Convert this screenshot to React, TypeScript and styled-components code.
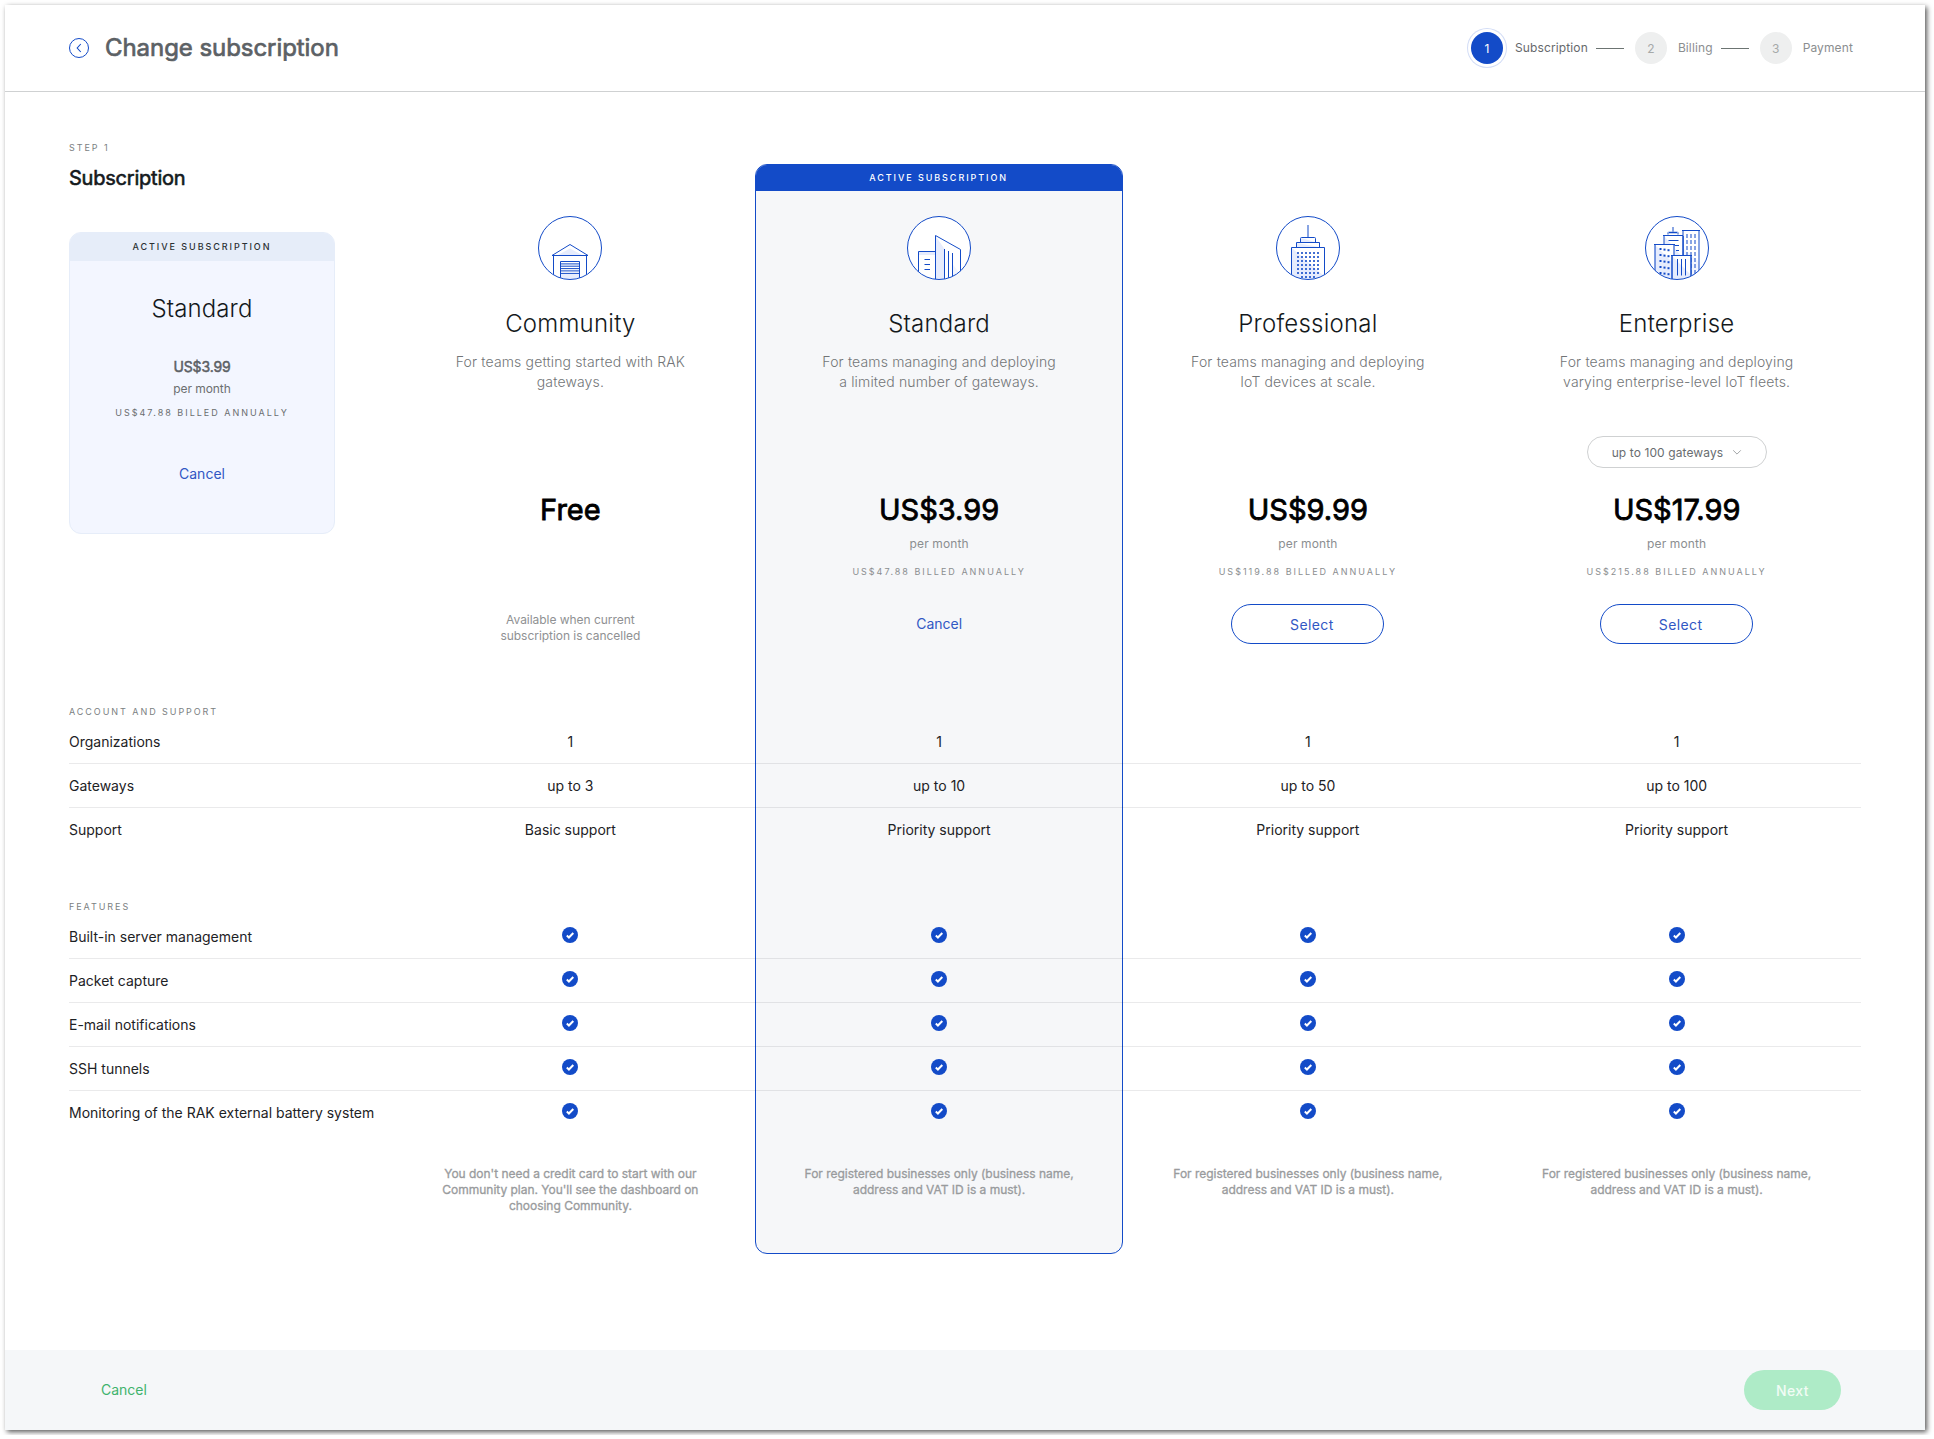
import React from "react";
import styled, { createGlobalStyle, css } from "styled-components";

const blue = "#134bc8";
const tint = "#e6ecfd";

const GlobalStyle = createGlobalStyle`
  * { box-sizing: border-box; }
  body {
    margin: 0;
    background: #fff;
    font-family: Inter, "Liberation Sans", sans-serif;
    color: #14191c;
  }
  h1, h2, h3, p { margin: 0; font-weight: 400; }
  button { font-family: inherit; background: none; border: 0; padding: 0; }
`;

const Window = styled.div`
  width: 1920px;
  height: 1425px;
  margin: 5px;
  display: flex;
  flex-direction: column;
  background: #fff;
  box-shadow: 2px 2px 5px rgba(0, 0, 0, 0.65);
`;

const Header = styled.header`
  height: 87px;
  flex: none;
  display: flex;
  align-items: center;
  justify-content: space-between;
  padding: 0 72px 0 64px;
  border-bottom: 1px solid #cfd1d2;
`;

const TitleGroup = styled.div`
  display: flex;
  align-items: center;
  gap: 16px;
`;

const Title = styled.h1`
  font-size: 24px;
  line-height: 30px;
  letter-spacing: -0.06px;
  color: #5c6165;
  -webkit-text-stroke: 0.7px #5c6165;
`;

const Steps = styled.div`
  display: flex;
  align-items: center;
`;

const StepDot = styled.span<{ $active?: boolean }>`
  width: 32px;
  height: 32px;
  border-radius: 50%;
  display: flex;
  align-items: center;
  justify-content: center;
  margin-right: 11px;
  font-size: 12px;
  background: #eeefef;
  color: #a6a9a9;
  ${(p) =>
    p.$active &&
    css`
      margin-right: 12px;
      background: ${blue};
      color: #fff;
      box-shadow: 0 0 0 3px #fff, 0 0 0 4px #d3ddf6;
    `}
`;

const StepLabel = styled.span<{ $active?: boolean }>`
  padding-bottom: 1px;
  font-size: 12px;
  line-height: 15px;
  letter-spacing: 0.12px;
  color: ${(p) => (p.$active ? "#66696b" : "#8b8e90")};
`;

const StepLine = styled.span`
  width: 28px;
  height: 1px;
  margin: 1px 11px 0 8px;
  background: #6c7472;
`;

const Content = styled.main`
  height: 1258px;
  flex: none;
  padding: 0 64px;
  display: grid;
  grid-template-columns: 317px repeat(4, minmax(0, 1fr));
  grid-template-rows: auto;
`;

/* Frame behind the active plan, spanning the full comparison table. */
const Highlight = styled.div`
  grid-area: 1 / 3 / 2 / 4;
  align-self: start;
  height: 1090px;
  margin: 72px 1px 0 0;
  border: 1px solid ${blue};
  border-radius: 12px;
  background: #f6f7f9;
  overflow: hidden;
`;

const overline = css`
  font-size: 9px;
  line-height: 12px;
  letter-spacing: 1.94px;
  text-transform: uppercase;
`;

const HighlightLabel = styled.div`
  ${overline}
  height: 26px;
  line-height: 25px;
  text-align: center;
  font-weight: 500;
  color: #fff;
  background: ${blue};
`;

const Table = styled.div`
  grid-area: 1 / 1 / 2 / -1;
  z-index: 1;
`;

const columns = css`
  display: grid;
  grid-template-columns: 317px repeat(4, minmax(0, 1fr));
`;

const Hero = styled.div`
  ${columns}
  height: 552px;
`;

const Aside = styled.div`
  padding: 50px 51px 0 0;
`;

const Overline = styled.p`
  ${overline}
  color: #7b7f82;
`;

const SectionTitle = styled.h2`
  margin-top: 12px;
  font-size: 20px;
  line-height: 24px;
  letter-spacing: -0.22px;
  -webkit-text-stroke: 0.6px #14191c;
`;

const CurrentCard = styled.div`
  height: 302px;
  margin-top: 42px;
  border: 1px solid #e6edf9;
  border-radius: 12px;
  background: #f3f6ff;
  text-align: center;
  overflow: hidden;
`;

const CurrentLabel = styled.div`
  ${overline}
  height: 28px;
  line-height: 28px;
  font-weight: 500;
  color: #2b3033;
  background: #e6edf9;
`;

const CurrentName = styled.h3`
  margin-top: 33px;
  font-size: 24px;
  font-weight: 300;
  line-height: 30px;
  letter-spacing: 0.1px;
`;

const CurrentPrice = styled.p`
  margin-top: 33px;
  font-size: 14px;
  line-height: 20px;
  letter-spacing: -0.15px;
  color: #5c6165;
  -webkit-text-stroke: 0.5px #5c6165;
`;

const CurrentPeriod = styled.p`
  margin-top: 4px;
  font-size: 12px;
  line-height: 16px;
  letter-spacing: -0.05px;
  color: #6b6e70;
`;

const CurrentBilled = styled.p`
  ${overline}
  margin-top: 10px;
  letter-spacing: 2px;
  color: #6b6e70;
`;

const LinkButton = styled.button<{ $tone?: string }>`
  font-size: 14px;
  line-height: 20px;
  color: ${(p) => p.$tone ?? "#3157c4"};
`;

const CurrentAction = styled.div`
  margin-top: 44px;
`;

const Plan = styled.section`
  display: flex;
  flex-direction: column;
  align-items: center;
  padding-top: 124px;
  text-align: center;
`;

const PlanName = styled.h3`
  margin-top: 29px;
  font-size: 24px;
  font-weight: 300;
  line-height: 30px;
  letter-spacing: 0.22px;
`;

const PlanText = styled.p`
  width: 250px;
  height: 40px;
  margin-top: 13px;
  font-size: 14px;
  font-weight: 300;
  line-height: 20px;
  letter-spacing: 0.15px;
  color: #727577;
`;

const Slot = styled.div`
  height: 32px;
  margin-top: 44px;
`;

const SizeSelect = styled.button`
  width: 180px;
  height: 32px;
  display: flex;
  align-items: center;
  padding: 0 0 0 24px;
  gap: 9px;
  border: 1px solid #cfd1d2;
  border-radius: 16px;
  background: #fff;
  font-size: 12px;
  letter-spacing: 0.1px;
  white-space: nowrap;
  color: #696d70;
`;

const Price = styled.p`
  margin-top: 22px;
  font-size: 29px;
  line-height: 40px;
  color: #000;
  -webkit-text-stroke: 0.8px #000;
`;

const Period = styled.p`
  height: 16px;
  margin-top: 6px;
  font-size: 12px;
  line-height: 16px;
  letter-spacing: 0.12px;
  color: #8b8e90;
`;

const Billed = styled.p`
  ${overline}
  height: 12px;
  margin-top: 14px;
  letter-spacing: 2px;
  color: #8b8e90;
`;

const Action = styled.div`
  height: 40px;
  margin-top: 26px;
  display: flex;
  align-items: center;
  justify-content: center;
`;

const SelectButton = styled.button`
  width: 153px;
  height: 40px;
  padding-left: 8px;
  border: 1px solid ${blue};
  border-radius: 20px;
  background: #fff;
  font-size: 14px;
  letter-spacing: 0.4px;
  color: #3157c4;
`;

const Unavailable = styled.p`
  width: 160px;
  padding-top: 8px;
  font-size: 12px;
  line-height: 16px;
  letter-spacing: -0.04px;
  color: #8f9193;
`;

const Group = styled.section<{ $top: number }>`
  margin-top: ${(p) => p.$top}px;
`;

const Rows = styled.div`
  margin-top: 2px;
`;

const Row = styled.div`
  ${columns}
  height: 44px;
  align-items: center;
  border-bottom: 1px solid rgba(20, 25, 28, 0.09);
  font-size: 14px;
  line-height: 20px;
  color: #1d2225;
  &:last-child {
    border-bottom-color: transparent;
  }
`;

const RowLabel = styled.span`
  white-space: nowrap;
`;

const Cell = styled.span`
  display: flex;
  justify-content: center;
`;

const CheckMark = styled.svg`
  display: block;
  margin-bottom: 3px;
`;

const Notes = styled.div`
  ${columns}
  margin-top: 31px;
`;

const Note = styled.p`
  justify-self: center;
  width: 272px;
  font-size: 12px;
  line-height: 16px;
  text-align: center;
  letter-spacing: -0.02px;
  color: #999b9d;
  -webkit-text-stroke: 0.3px #999b9d;
  &:first-child {
    grid-column: 2;
  }
`;

const Footer = styled.footer`
  height: 80px;
  flex: none;
  display: flex;
  align-items: center;
  justify-content: space-between;
  padding: 0 84px 0 96px;
  background: #f5f7f9;
`;

const NextButton = styled.button`
  width: 97px;
  height: 40px;
  border-radius: 20px;
  background: #aeebc7;
  color: #f1fcf5;
  font-size: 14px;
  font-weight: 500;
  letter-spacing: 0.4px;
`;

function Badge({ id, children }: { id: string; children: React.ReactNode }) {
  return (
    <svg width="64" height="64" viewBox="0 0 64 64" fill="none" stroke={blue}>
      <clipPath id={id}>
        <circle cx="32" cy="32" r="31.5" />
      </clipPath>
      <circle cx="32" cy="32" r="31.5" fill="#fff" stroke="none" />
      <g clipPath={`url(#${id})`}>{children}</g>
      <circle cx="32" cy="32" r="31.5" />
    </svg>
  );
}

function Garage() {
  return (
    <Badge id="garage">
      <path d="M19 39.5 32 32.5 45 39.5Z" fill={tint} stroke="none" />
      <path d="M22.5 57h19v8h-19z" fill={tint} stroke="none" />
      <path d="M14 39.5 32 28.5 50 39.5Z" />
      <path d="M15.5 39.5V64M48.5 39.5V64M22.5 64V45.5h19V64M22.5 47.9h19M22.5 50.2h19M22.5 52.6h19M22.5 54.9h19M22.5 57.4h19" />
    </Badge>
  );
}

function Office() {
  return (
    <Badge id="office">
      <path d="M12 36h16v3H12zM28.5 20 37.5 33v31h-9z" fill={tint} stroke="none" />
      <path d="M45.5 48 53 58 45.5 62z" fill={tint} opacity=".5" stroke="none" />
      <path d="M28.5 35.5h-17V64M28.5 64V19.5l25 14V64M37.5 33v31M41.5 35v29M45.5 37v27M17.5 43.5H23M17.5 48.5H23M17.5 53.5H23" />
    </Badge>
  );
}

function Tower() {
  const dots = [];
  for (let r = 0; r < 7; r++) {
    for (let c = 0; c < 6; c++) {
      if (r === 6 && (c === 0 || c === 5)) continue;
      dots.push(<rect key={`${r}-${c}`} x={21 + c * 4} y={36 + r * 4} width="2" height="2" />);
    }
  }
  return (
    <Badge id="tower">
      <path d="M16 32 48 60V64H16zM25 22l14 4H25zM21 27l22 4H21z" fill={tint} stroke="none" />
      <path d="M32 9v12" strokeWidth="2" opacity=".5" />
      <path d="M24.5 26.5v-4q0-1 1-1h13q1 0 1 1v4M20.5 31.5v-5h23v5M15.5 64V31.5h33V64" />
      <g fill={blue} opacity=".8" stroke="none">{dots}</g>
    </Badge>
  );
}

function City() {
  const right = [];
  const left = [];
  for (let r = 0; r < 7; r++) {
    for (let c = 0; c < 3; c++) {
      right.push(<rect key={`${r}-${c}`} x={41 + c * 4} y={18 + r * 6} width="2" height="4" />);
      if (r < 5) {
        left.push(
          <rect key={`${r}-${c}`} x={14.5 + c * 4} y={32 + c * 0.6 + r * 6} width="2" height="2" />
        );
      }
    }
  }
  return (
    <Badge id="city">
      <path d="M38 14.5h16.5V64H38z" fill="#fff" stroke="none" />
      <path d="M38 32 54 46v18H38z" fill={tint} opacity=".5" stroke="none" />
      <g fill={blue} opacity=".5" stroke="none">{right}</g>
      <path d="M38 14v50M54 14v50" strokeWidth="2" opacity=".5" />
      <path d="M37 14.5h18" />
      <path d="M19 20h19v44H19z" fill="#fff" stroke="none" />
      <path d="M19 20 38 42v22H19z" fill={tint} stroke="none" />
      <path d="M28 11v5M19 20v10M23 18.5v-1q0-1 1-1h8q1 0 1 1v1" strokeWidth="2" opacity=".5" />
      <path d="M38 20v20" strokeWidth="2" opacity=".75" />
      <path d="M24 16.5h8M18 19.5h20M23.5 24.5h10M28 29.5h6M31 34.5h3" />
      <path d="M10 29h19.5v35H10z" fill="#fff" stroke="none" />
      <path d="M10 29 29 48v16H10z" fill={tint} stroke="none" />
      <path d="M10 28v36M29 28v12" strokeWidth="2" opacity=".55" />
      <path d="M9 28.5h21" />
      <g fill={blue} stroke="none">{left}</g>
      <path d="M27 39.5h19V64H27z" fill="#fff" stroke="none" />
      <path d="M27 40 45 58v6H27z" fill={tint} stroke="none" />
      <path d="M27 39v25M46 39v25" strokeWidth="2" opacity=".75" />
      <path d="M26 39.5h21M32.5 43v16.5M36.5 43v16.5M40.5 43v16.5" />
    </Badge>
  );
}

function Check() {
  return (
    <CheckMark width="16" height="16" viewBox="0 0 16 16">
      <circle cx="8" cy="8" r="8" fill={blue} />
      <path d="M4.8 8.6 6.9 10.5 11.3 6" fill="none" stroke="#fff" strokeWidth="2" />
    </CheckMark>
  );
}

const business =
  "For registered businesses only (business name, address and VAT ID is a must).";

const plans = [
  {
    name: "Community",
    icon: <Garage />,
    text: ["For teams getting started with RAK", "gateways."],
    price: "Free",
    note: "You don't need a credit card to start with our Community plan. You'll see the dashboard on choosing Community.",
  },
  {
    name: "Standard",
    icon: <Office />,
    text: ["For teams managing and deploying", "a limited number of gateways."],
    price: "US$3.99",
    billed: "US$47.88 billed annually",
    note: business,
    active: true,
  },
  {
    name: "Professional",
    icon: <Tower />,
    text: ["For teams managing and deploying", "IoT devices at scale."],
    price: "US$9.99",
    billed: "US$119.88 billed annually",
    note: business,
  },
  {
    name: "Enterprise",
    icon: <City />,
    text: ["For teams managing and deploying", "varying enterprise-level IoT fleets."],
    size: "up to 100 gateways",
    price: "US$17.99",
    billed: "US$215.88 billed annually",
    note: business,
  },
];

const support: [string, string[]][] = [
  ["Organizations", ["1", "1", "1", "1"]],
  ["Gateways", ["up to 3", "up to 10", "up to 50", "up to 100"]],
  ["Support", ["Basic support", "Priority support", "Priority support", "Priority support"]],
];

const features = [
  "Built-in server management",
  "Packet capture",
  "E-mail notifications",
  "SSH tunnels",
  "Monitoring of the RAK external battery system",
];

const steps = ["Subscription", "Billing", "Payment"];

export default function App() {
  return (
    <>
      <GlobalStyle />
      <Window>
        <Header>
          <TitleGroup>
            <svg width="20" height="20" viewBox="0 0 20 20" fill="none" stroke={blue}>
              <circle cx="10" cy="10" r="9.5" />
              <path d="M11.8 6 8.2 10l3.6 4" strokeWidth="1.1" />
            </svg>
            <Title>Change subscription</Title>
          </TitleGroup>
          <Steps>
            {steps.map((label, i) => (
              <React.Fragment key={label}>
                {i > 0 && <StepLine />}
                <StepDot $active={i === 0}>{i + 1}</StepDot>
                <StepLabel $active={i === 0}>{label}</StepLabel>
              </React.Fragment>
            ))}
          </Steps>
        </Header>

        <Content>
          <Highlight>
            <HighlightLabel>Active subscription</HighlightLabel>
          </Highlight>
          <Table>
            <Hero>
              <Aside>
                <Overline>Step 1</Overline>
                <SectionTitle>Subscription</SectionTitle>
                <CurrentCard>
                  <CurrentLabel>Active subscription</CurrentLabel>
                  <CurrentName>Standard</CurrentName>
                  <CurrentPrice>US$3.99</CurrentPrice>
                  <CurrentPeriod>per month</CurrentPeriod>
                  <CurrentBilled>US$47.88 billed annually</CurrentBilled>
                  <CurrentAction>
                    <LinkButton>Cancel</LinkButton>
                  </CurrentAction>
                </CurrentCard>
              </Aside>
              {plans.map((p) => (
                <Plan key={p.name}>
                  {p.icon}
                  <PlanName>{p.name}</PlanName>
                  <PlanText>
                    {p.text[0]}
                    <br />
                    {p.text[1]}
                  </PlanText>
                  <Slot>
                    {p.size && (
                      <SizeSelect>
                        {p.size}
                        <svg width="10" height="10" viewBox="0 0 10 10" fill="none" stroke="#a3a6a8">
                          <path d="M1.2 3.3 5 7.1l3.8-3.8" />
                        </svg>
                      </SizeSelect>
                    )}
                  </Slot>
                  <Price>{p.price}</Price>
                  <Period>{p.billed && "per month"}</Period>
                  <Billed>{p.billed}</Billed>
                  <Action>
                    {p.active ? (
                      <LinkButton>Cancel</LinkButton>
                    ) : p.billed ? (
                      <SelectButton>Select</SelectButton>
                    ) : (
                      <Unavailable>Available when current subscription is cancelled</Unavailable>
                    )}
                  </Action>
                </Plan>
              ))}
            </Hero>

            <Group $top={62}>
              <Overline>Account and support</Overline>
              <Rows>
                {support.map(([label, values]) => (
                  <Row key={label}>
                    <RowLabel>{label}</RowLabel>
                    {values.map((v, i) => (
                      <Cell key={i}>{v}</Cell>
                    ))}
                  </Row>
                ))}
              </Rows>
            </Group>

            <Group $top={49}>
              <Overline>Features</Overline>
              <Rows>
                {features.map((label) => (
                  <Row key={label}>
                    <RowLabel>{label}</RowLabel>
                    {plans.map((p) => (
                      <Cell key={p.name}>
                        <Check />
                      </Cell>
                    ))}
                  </Row>
                ))}
              </Rows>
            </Group>

            <Notes>
              {plans.map((p) => (
                <Note key={p.name}>{p.note}</Note>
              ))}
            </Notes>
          </Table>
        </Content>

        <Footer>
          <LinkButton $tone="#3fb36d">Cancel</LinkButton>
          <NextButton>Next</NextButton>
        </Footer>
      </Window>
    </>
  );
}
